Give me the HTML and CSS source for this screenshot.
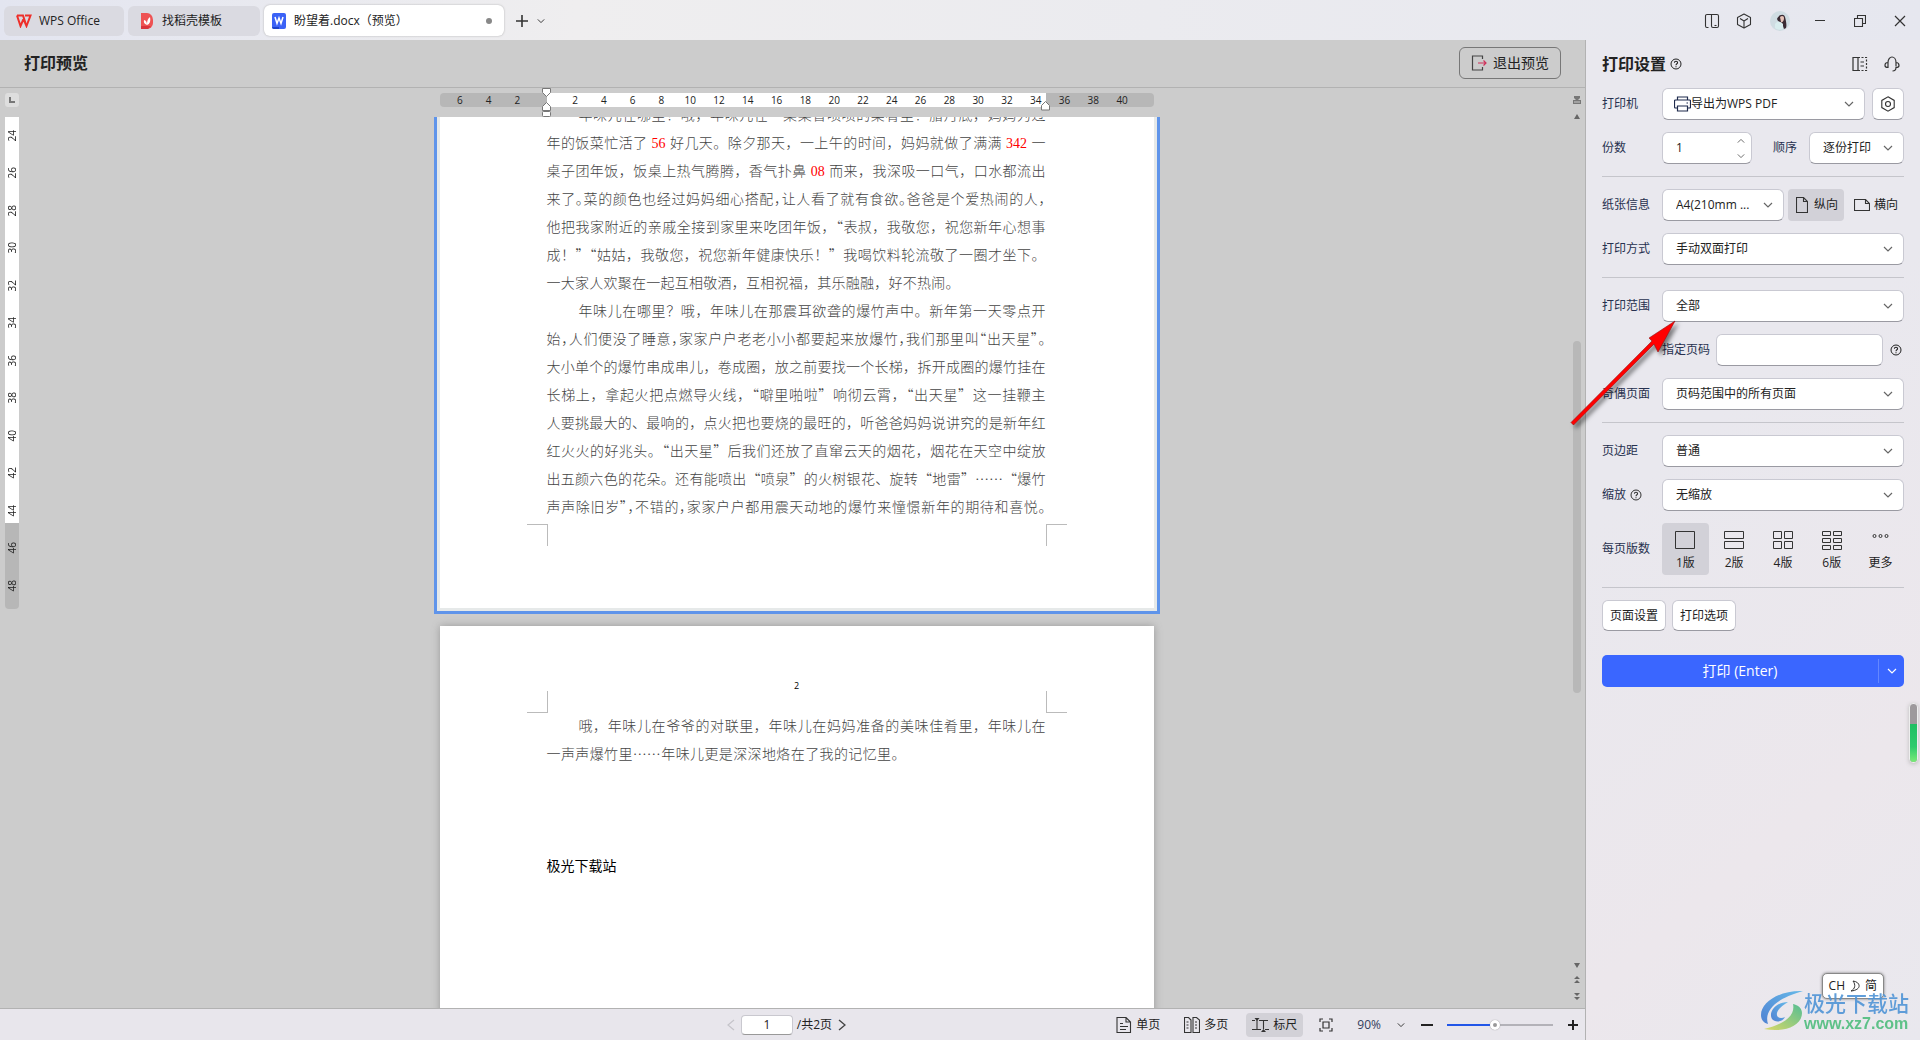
FILE: index.html
```html
<!DOCTYPE html>
<html lang="zh-CN">
<head>
<meta charset="utf-8">
<title>盼望着.docx（预览） - WPS Office</title>
<link rel="stylesheet" href="styles.css">
</head>
<body>
<svg class="defs" width="0" height="0" aria-hidden="true">
  <symbol id="chev" viewBox="0 0 10 10"><path d="M1 3l4 4 4-4" fill="none" stroke="currentColor" stroke-width="1.2"/></symbol>
  <symbol id="help" viewBox="0 0 12 12"><circle cx="6" cy="6" r="5" fill="none" stroke="currentColor"/><path d="M4.4 4.8C4.4 2.6 7.6 2.7 7.6 4.7 7.6 5.800 6 5.800 6 7.200M6 8.200v1.100" fill="none" stroke="currentColor" stroke-width="1.100"/></symbol>
</svg>
<div class="app">
  <header class="titlebar">
    <nav class="tabs">
      <button class="tab tab--home"><svg width="16" height="14" viewBox="0 0 16 14"><path d="M1 1.500h6L9.500 9M1 1.500L4.500 12 7.500 5l3 7L14.500 1.500H9" fill="none" stroke="#ee2f2a" stroke-width="2"/></svg>WPS Office</button>
      <button class="tab tab--docer"><svg width="14" height="16" viewBox="0 0 14 16"><path d="M1 0h6a6 7 0 0 1 6 7v3a6 6 0 0 1-6 6H1z" fill="#ee5253"/><path d="M1 13h10l-3 3H1z" fill="#d9343c"/><path d="M7 12C4 11 3.500 9 4 7c2 .5 3 2 3 5 0-4 .5-6 3-8 .8 4 0 7-3 8z" fill="#fff"/></svg>找稻壳模板</button>
      <button class="tab tab--active"><svg width="14" height="16" viewBox="0 0 14 16"><rect width="14" height="16" rx="2" fill="#3b62f6"/><path d="M0 14h7v2H2a2 2 0 0 1-2-2z" fill="#1d42c8"/><path d="M3 4l2 6.500L7 5l2 5.500L11 4" fill="none" stroke="#fff" stroke-width="1.500"/></svg><span class="tab__name">盼望着.docx（预览）</span><i class="tab__dot"></i></button>
      <button class="icon-btn icon-btn--new" aria-label="新建"><svg width="14" height="14" viewBox="0 0 14 14"><path d="M7 1v12M1 7h12" stroke="#333" stroke-width="1.600"/></svg></button>
      <button class="icon-btn" aria-label="标签列表"><svg width="8" height="8"><use href="#chev"/></svg></button>
    </nav>
    <div class="winctl">
      <button class="icon-btn" aria-label="侧边"><svg width="16" height="16" viewBox="0 0 16 16"><g fill="none" stroke="#333" stroke-width="1.100"><path d="M4.500 14.500H3A1.500 1.500 0 0 1 1.500 13V3A1.500 1.500 0 0 1 3 1.500h10A1.500 1.500 0 0 1 14.500 3v10a1.500 1.500 0 0 1-1.500 1.500H9A1.500 1.500 0 0 1 7.500 13V1.500"/><path d="M10.500 12.500h2"/></g></svg></button>
      <button class="icon-btn" aria-label="应用"><svg width="16" height="16" viewBox="0 0 16 16"><g fill="none" stroke="#333" stroke-width="1.100" stroke-linejoin="round"><path d="M8 1l6.500 3.500v7L8 15l-6.500-3.500v-7z"/><path d="M4 5.500l4 2.500 4-2.500M8 8v7"/></g></svg></button>
      <button class="icon-btn icon-btn--user" aria-label="账号"><svg width="20" height="20" viewBox="0 0 20 20"><circle cx="10" cy="10" r="10" fill="#cfdce2"/><path d="M7 8c1-4 7-6 8-2 1 4 2 8 1 11l-2 1-2-6-4-2z" fill="#3a2b33"/><path d="M10 6c2-2 4-1 4 1s-1 5-3 4z" fill="#e7c3b8"/><path d="M5 13c3-4 6-2 8 0l0 5c-3 1-6 1-8-1z" fill="#d8edee"/></svg></button>
      <button class="icon-btn icon-btn--win" aria-label="最小化"><svg width="12" height="12" viewBox="0 0 12 12"><path d="M1 5.500h10" stroke="#333"/></svg></button>
      <button class="icon-btn icon-btn--win" aria-label="还原"><svg width="12" height="12" viewBox="0 0 12 12"><path d="M.5 3.500h8v8h-8zM3.500 3.500v-3h8v8h-3" fill="none" stroke="#333" stroke-width="1.100"/></svg></button>
      <button class="icon-btn icon-btn--win" aria-label="关闭"><svg width="12" height="12" viewBox="0 0 12 12"><path d="M1 1l10 10M11 1L1 11" stroke="#333" stroke-width="1.200"/></svg></button>
    </div>
  </header>

  <main class="preview">
    <div class="preview__head">
      <h1 class="title">打印预览</h1>
      <button class="exit"><svg width="16" height="16" viewBox="0 0 16 16"><path d="M11.500 4V1H1.500v14h10v-3" fill="none" stroke="#444" stroke-width="1.200"/><path d="M7 8h8M12.500 5.500L15 8l-2.500 2.500" fill="none" stroke="#d0315a" stroke-width="1.200"/></svg>退出预览</button>
    </div>
    <div class="workspace">
      <div class="corner"><svg width="14" height="14" viewBox="0 0 14 14"><rect width="14" height="14" rx="3" fill="#dedede"/><path d="M5 4v5h5" fill="none" stroke="#777" stroke-width="2"/></svg></div>
      <div class="hruler-row">
        <div class="hruler">
          <span>6</span><span>4</span><span>2</span><span></span><span>2</span><span>4</span><span>6</span><span>8</span><span>10</span><span>12</span><span>14</span><span>16</span><span>18</span><span>20</span><span>22</span><span>24</span><span>26</span><span>28</span><span>30</span><span>32</span><span>34</span><span>36</span><span>38</span><span>40</span>
          <svg class="indent indent--left" width="12" height="30" viewBox="0 0 12 30"><g fill="#fff" stroke="#777"><path d="M1.500.5h8v4l-4 4-4-4z"/><path d="M5.500 14.500l4 4v4h-8v-4z"/><rect x="1.500" y="23.500" width="8" height="5" rx="1"/></g></svg>
          <svg class="indent indent--right" width="12" height="30" viewBox="0 0 12 30"><path d="M5.500 13.500l4 4v4.500h-8v-4.500z" fill="#fff" stroke="#777"/></svg>
        </div>
      </div>
      <div class="vruler-col">
        <div class="vruler"><span>24</span><span>26</span><span>28</span><span>30</span><span>32</span><span>34</span><span>36</span><span>38</span><span>40</span><span>42</span><span>44</span><span>46</span><span>48</span></div>
      </div>
      <div class="pages">
        <article class="page page--current">
          <div class="text">
            <p><span class="line line--first">年味儿在哪里？哦，年味儿在一桌桌香喷喷的菜肴里！腊月底，妈妈为过</span>
            <span class="line">年的饭菜忙活了<b class="num">56</b>好几天。除夕那天，一上午的时间，妈妈就做了满满<b class="num">342</b>一</span>
            <span class="line">桌子团年饭，饭桌上热气腾腾，香气扑鼻<b class="num">08</b>而来，我深吸一口气，口水都流出</span>
            <span class="line line--tight">来了。菜的颜色也经过妈妈细心搭配，让人看了就有食欲。爸爸是个爱热闹的人，</span>
            <span class="line">他把我家附近的亲戚全接到家里来吃团年饭，“表叔，我敬您，祝您新年心想事</span>
            <span class="line">成！”“姑姑，我敬您，祝您新年健康快乐！”我喝饮料轮流敬了一圈才坐下。</span>
            <span class="line line--last-a">一大家人欢聚在一起互相敬酒，互相祝福，其乐融融，好不热闹。</span></p>
            <p><span class="line line--first">年味儿在哪里？哦，年味儿在那震耳欲聋的爆竹声中。新年第一天零点开</span>
            <span class="line line--tight">始，人们便没了睡意，家家户户老老小小都要起来放爆竹，我们那里叫“出天星”。</span>
            <span class="line">大小单个的爆竹串成串儿，卷成圈，放之前要找一个长梯，拆开成圈的爆竹挂在</span>
            <span class="line">长梯上，拿起火把点燃导火线，“噼里啪啦”响彻云霄，“出天星”这一挂鞭主</span>
            <span class="line">人要挑最大的、最响的，点火把也要烧的最旺的，听爸爸妈妈说讲究的是新年红</span>
            <span class="line">红火火的好兆头。“出天星”后我们还放了直窜云天的烟花，烟花在天空中绽放</span>
            <span class="line">出五颜六色的花朵。还有能喷出“喷泉”的火树银花、旋转“地雷”……“爆竹</span>
            <span class="line line--tight">声声除旧岁”，不错的，家家户户都用震天动地的爆竹来憧憬新年的期待和喜悦。</span></p>
          </div>
          <div class="marks marks--bottom"><i></i><i></i></div>
        </article>
        <article class="page page--next">
          <div class="page__no">2</div>
          <div class="marks marks--top"><i></i><i></i></div>
          <div class="text">
            <p><span class="line line--first">哦，年味儿在爷爷的对联里，年味儿在妈妈准备的美味佳肴里，年味儿在</span>
            <span class="line line--last-b">一声声爆竹里……年味儿更是深深地烙在了我的记忆里。</span></p>
            <p class="sign">极光下载站</p>
          </div>
        </article>
      </div>
      <div class="scroll">
        <svg width="10" height="10" viewBox="0 0 10 10"><path d="M2 0h6v2L6 4h3v4H1V4h3L2 2z" fill="#777"/><path d="M0 8.500h10M3 5v2M5 5v2M7 5v2" stroke="#ccc"/></svg>
        <svg width="6" height="5" viewBox="0 0 6 5"><path d="M3 0l3 5H0z" fill="#666"/></svg>
        <div class="scroll__track"><div class="scroll__thumb"></div></div>
        <svg width="6" height="5" viewBox="0 0 6 5"><path d="M3 5l3-5H0z" fill="#666"/></svg>
        <svg width="6" height="8" viewBox="0 0 6 8"><path d="M3 0l3 3H0zM3 4l3 3H0z" fill="#666"/></svg>
        <svg width="6" height="8" viewBox="0 0 6 8"><path d="M3 4l3-3H0zM3 8l3-3H0z" fill="#666"/></svg>
      </div>
    </div>
    <footer class="status">
      <div class="pager">
        <button class="icon-btn pager__prev" aria-label="上一页"><svg width="8" height="12" viewBox="0 0 8 12"><path d="M7 1L1 6l6 5" fill="none" stroke="#c5c4ca" stroke-width="1.200"/></svg></button>
        <input class="pager__input" aria-label="页码" value="1"><span>/共2页</span>
        <button class="icon-btn" aria-label="下一页"><svg width="8" height="12" viewBox="0 0 8 12"><path d="M1 1l6 5-6 5" fill="none" stroke="#444" stroke-width="1.400"/></svg></button>
      </div>
      <div class="views">
        <button class="view"><svg width="16" height="16" viewBox="0 0 16 16"><path d="M1 .5h9l4.500 4.500v10.500H1zM10 .5V5h4.500M4 6.500h3M4 9.500h8M4 12.500h6" fill="none" stroke="#333" stroke-width="1.100"/></svg>单页</button>
        <button class="view"><svg width="16" height="16" viewBox="0 0 16 16"><path d="M.5.500h4L7 3v12.500H.500zM9 .5h3.500L15.500 3v12.500H9zM2.500 5h2M2.500 8h2M2.500 11h2M11 5h2M11 8h2M11 11h2" fill="none" stroke="#333" stroke-width="1.100"/></svg>多页</button>
        <button class="view view--on"><svg width="17" height="16" viewBox="0 0 17 16"><path d="M0 3.500h3M7 3.500h9M0 12.500h9M13 12.500h4M5 3v9.500M11.500 3.500V12" fill="none" stroke="#333" stroke-width="1.100"/><path d="M2.500 1h5L5 4zM9 15h5l-2.500-3z" fill="#333"/></svg>标尺</button>
        <button class="icon-btn icon-btn--fit" aria-label="适合页面"><svg width="14" height="14" viewBox="0 0 14 14"><path d="M1 4V1h3M10 1h3v3M13 10v3h-3M4 13H1v-3M4 4h6v6H4z" fill="none" stroke="#333" stroke-width="1.200"/></svg></button>
        <span class="zoom-val">90%</span>
        <button class="icon-btn icon-btn--zoom" aria-label="缩放比例"><svg width="8" height="8"><use href="#chev"/></svg></button>
        <button class="icon-btn" aria-label="缩小"><svg width="12" height="12" viewBox="0 0 12 12"><path d="M0 6h12" stroke="#222" stroke-width="2"/></svg></button>
        <input class="zoom" type="range" min="0" max="100" value="45" aria-label="缩放">
        <button class="icon-btn" aria-label="放大"><svg width="10" height="10" viewBox="0 0 10 10"><path d="M5 0v10M0 5h10" stroke="#222" stroke-width="2"/></svg></button>
      </div>
    </footer>
  </main>

  <aside class="panel">
    <div class="panel__head">
      <h2 class="title">打印设置</h2><svg width="12" height="12"><use href="#help"/></svg>
      <button class="icon-btn panel__dock" aria-label="停靠"><svg width="16" height="16" viewBox="0 0 16 16"><path d="M1 1.500h5v13H1z" fill="none" stroke="#333" stroke-width="1.200"/><path d="M6 1.500h8.500v13H6" fill="none" stroke="#333" stroke-width="1.200" stroke-dasharray="2 1.500"/><path d="M8.500 6h3.500M8.500 10h3.500" stroke="#333" stroke-width="1.200"/></svg></button>
      <button class="icon-btn" aria-label="客服"><svg width="16" height="16" viewBox="0 0 16 16"><path d="M4 6.500a4 5.500 0 0 1 8 0v4M4 6.500C1.500 6.500 1 8 1 9.500s1 2 3 2zM12 6.500c2.500 0 3 1.500 3 3s-1 2-3 2c0 2-1 3.500-3.500 3.500" fill="none" stroke="#333" stroke-width="1.200"/></svg></button>
    </div>
    <section class="group">
      <div class="row">
        <label class="label" for="printer">打印机</label>
        <div class="field field--grow"><svg width="17" height="16" viewBox="0 0 17 16"><path d="M3.500 4V1h10v3M3.500 12H1.500a1 1 0 0 1-1-1V5a1 1 0 0 1 1-1h14a1 1 0 0 1 1 1v6a1 1 0 0 1-1 1h-2M3.500 10h10v5h-10zM12.500 7h1.500" fill="none" stroke="#1f2b4d" stroke-width="1.200"/></svg><select id="printer"><option>导出为WPS PDF</option></select><svg class="caret" width="10" height="10"><use href="#chev"/></svg></div>
        <button class="field field--square" aria-label="打印机属性"><svg width="16" height="16" viewBox="0 0 16 16"><path d="M8 .8l6.200 3.600v7.200L8 15.200l-6.200-3.600V4.400z" fill="none" stroke="#333" stroke-width="1.100"/><circle cx="8" cy="8" r="2.500" fill="none" stroke="#333" stroke-width="1.100"/></svg></button>
      </div>
      <div class="row">
        <label class="label" for="copies">份数</label>
        <div class="field field--copies"><input id="copies" value="1"><div class="spin"><svg class="up" width="8" height="8"><use href="#chev"/></svg><svg width="8" height="8"><use href="#chev"/></svg></div></div>
        <label class="label label--order" for="order">顺序</label>
        <div class="field field--order"><select id="order"><option>逐份打印</option></select><svg class="caret" width="10" height="10"><use href="#chev"/></svg></div>
      </div>
    </section>
    <section class="group">
      <div class="row row--paper">
        <label class="label" for="paper">纸张信息</label>
        <div class="field field--paper"><select id="paper"><option>A4(210mm ...</option></select><svg class="caret" width="10" height="10"><use href="#chev"/></svg></div>
        <button class="orient orient--on"><svg width="12" height="16" viewBox="0 0 12 16"><path d="M.5.500h7l4 4v11H.500zM7.500.500v4h4" fill="none" stroke="#333" stroke-width="1.100"/></svg>纵向</button>
        <button class="orient orient--wide"><svg width="16" height="12" viewBox="0 0 16 12"><path d="M.5.500h11l4 4v7H.500zM11.500.500v4h4" fill="none" stroke="#333" stroke-width="1.100"/></svg>横向</button>
      </div>
      <div class="row">
        <label class="label" for="mode">打印方式</label>
        <div class="field field--grow"><select id="mode"><option>手动双面打印</option></select><svg class="caret" width="10" height="10"><use href="#chev"/></svg></div>
      </div>
    </section>
    <section class="group">
      <div class="row">
        <label class="label" for="range">打印范围</label>
        <div class="field field--grow"><select id="range"><option>全部</option></select><svg class="caret" width="10" height="10"><use href="#chev"/></svg></div>
      </div>
      <div class="row row--pages">
        <label class="label" for="pages">指定页码</label>
        <div class="field field--grow"><input id="pages"></div><svg width="12" height="12"><use href="#help"/></svg>
      </div>
      <div class="row">
        <label class="label" for="parity">奇偶页面</label>
        <div class="field field--grow"><select id="parity"><option>页码范围中的所有页面</option></select><svg class="caret" width="10" height="10"><use href="#chev"/></svg></div>
      </div>
    </section>
    <section class="group">
      <div class="row">
        <label class="label" for="margin">页边距</label>
        <div class="field field--grow"><select id="margin"><option>普通</option></select><svg class="caret" width="10" height="10"><use href="#chev"/></svg></div>
      </div>
      <div class="row">
        <label class="label" for="scale">缩放 <svg width="12" height="12"><use href="#help"/></svg></label>
        <div class="field field--grow"><select id="scale"><option>无缩放</option></select><svg class="caret" width="10" height="10"><use href="#chev"/></svg></div>
      </div>
      <div class="row row--tiles">
        <span class="label">每页版数</span>
        <div class="tiles">
          <button class="tile tile--on"><svg width="20" height="20" viewBox="0 0 20 20"><path d="M.5 1.500h19v17H.500z"/></svg>1版</button>
          <button class="tile"><svg width="20" height="20" viewBox="0 0 20 20"><path d="M.5 1.500h19v7H.500zM.5 11.500h19v7H.500z"/></svg>2版</button>
          <button class="tile"><svg width="20" height="20" viewBox="0 0 20 20"><path d="M.5 1.500h8v7h-8zM11.500 1.500h8v7h-8zM.5 11.500h8v7h-8zM11.500 11.500h8v7h-8z"/></svg>4版</button>
          <button class="tile"><svg width="20" height="20" viewBox="0 0 20 20"><path d="M.5 1.500h8v4h-8zM11.500 1.500h8v4h-8zM.5 8.500h8v4h-8zM11.500 8.500h8v4h-8zM.5 15.500h8v4h-8zM11.500 15.500h8v4h-8z"/></svg>6版</button>
          <button class="tile"><svg width="20" height="20" viewBox="0 0 20 20"><circle cx="3.500" cy="6" r="1.500"/><circle cx="9.500" cy="6" r="1.500"/><circle cx="15.500" cy="6" r="1.500"/></svg>更多</button>
        </div>
      </div>
    </section>
    <div class="actions"><button class="small-btn">页面设置</button><button class="small-btn">打印选项</button></div>
    <div class="print"><button class="print__go">打印 (Enter)</button><button class="print__more" aria-label="更多打印方式"><svg width="10" height="10"><use href="#chev"/></svg></button></div>
  </aside>
</div>

<svg class="arrow" width="120" height="120" viewBox="0 0 120 120"><path d="M8 109.500L10.500 112 91 31l4 8L112 8 86 25l3 3z" fill="#f00" stroke="#901010" stroke-width=".6"/></svg>
<div class="meter"><i></i></div>
<div class="ime">CH <svg width="12" height="12" viewBox="0 0 12 12"><path d="M4 1c8 1 9 9-2 10 4-2 5-6 2-10z" fill="none" stroke="#333"/></svg> 简</div>
<div class="watermark">
  <svg width="44" height="42" viewBox="0 0 44 42"><defs><linearGradient id="wb" x1="0" y1="1" x2="1" y2="0"><stop offset="0" stop-color="#3f78d0"/><stop offset="1" stop-color="#58b4e8"/></linearGradient><linearGradient id="wg" x1="0" y1="1" x2="1" y2="0"><stop offset="0" stop-color="#d9d85a"/><stop offset="1" stop-color="#45b98a"/></linearGradient></defs><path d="M43 1C20 0 1 12 1 25c0 5 3 8 7 9-4-12 6-25 35-33z" fill="url(#wb)"/><path d="M28 12C16 12 8 22 12 29c3 4 11 3 13-2-4 2-9 1-8-4 1-4 6-8 11-11z" fill="url(#wb)"/><path d="M33 14c2 9-4 19-29 25 20 4 38-3 38-16 0-5-4-8-9-9z" fill="url(#wg)"/></svg>
  <div><div class="watermark__name">极光下载站</div><div class="watermark__url">www.xz7.com</div></div>
</div>
</body>
</html>
```
FILE: styles.css
```css
* { box-sizing: border-box; }
body {
  margin: 0;
  font: 12px/16px "Open Sans", "Noto Sans CJK SC", sans-serif;
  color: #222;
  background: #e9e8ee;
}
button, input, select { font: inherit; color: inherit; margin: 0; padding: 0; border: 0; background: none; outline: 0; }
button { display: flex; align-items: center; white-space: nowrap; }
svg { display: block; flex: none; }
.defs { position: absolute; }
.title { margin: 0; font-size: 16px; line-height: 24px; font-weight: 700; }

.app {
  display: grid;
  grid-template: 40px minmax(0, 1fr) / minmax(0, 1fr) 334px;
  height: 100vh;
  background: linear-gradient(140deg, #e9e8ee 70%, #ece7ec 88%, #e9e8ee);
}

/* title bar */
.titlebar {
  grid-column: 1 / -1;
  display: flex;
  justify-content: space-between;
  padding-top: 1px;
  background: linear-gradient(90deg, #e3e5f0, #efeeef 30%, #ebebef 60%, #e6e7ef);
}
.tabs { display: flex; align-items: center; gap: 4px; padding-left: 4px; }
.tab { height: 30px; padding: 0 12px; gap: 8px; border-radius: 6px; background: #dadae1; }
.tab--home { width: 120px; gap: 7px; }
.tab--docer { width: 132px; }
.tab--active { width: 240px; height: 31px; padding: 0 12px 0 8px; background: #fff; box-shadow: 0 0 2px #aaa; }
.tab__name { flex: 1; text-align: left; }
.tab__dot { width: 6px; height: 6px; border-radius: 3px; background: #888; }
.icon-btn { flex: none; justify-content: center; color: #333; }
.icon-btn--new { margin: 0 4px 0 7px; }
.winctl { display: flex; align-items: center; }
.winctl .icon-btn { width: 32px; }
.winctl .icon-btn--user, .winctl .icon-btn--win { width: 40px; }

/* preview area */
.preview {
  display: grid;
  grid-template-rows: 48px minmax(0, 1fr) 32px;
  border-right: 1px solid #b2b2b2;
  background: #ccc;
}
.preview__head { display: flex; align-items: center; justify-content: space-between; padding: 0 24px 1px; border-bottom: 1px solid #b2b2b2; }
.exit { height: 32px; padding: 0 11px; gap: 6px; border: 1px solid #777; border-radius: 6px; font-size: 14px; }
.workspace { display: grid; grid-template: 29px minmax(0, 1fr) / 24px minmax(0, 1fr) 16px; }
.corner { padding: 5px 0 0 5px; }
.hruler-row { display: flex; justify-content: center; padding-top: 5px; }
.hruler {
  position: relative;
  display: grid;
  grid-template-columns: repeat(24, 1fr);
  width: 714px;
  height: 14px;
  padding: 0 17px 0 6px;
  border-radius: 4px;
  background: linear-gradient(90deg, #b7b7b7 107px, #fff 107px, #fff 606px, #b7b7b7 606px);
  font-size: 10px;
  line-height: 14px;
  text-align: center;
}
.indent { position: absolute; top: -5px; }
.indent--left { left: 101px; }
.indent--right { left: 600px; }
.vruler-col { padding-left: 5px; }
.vruler {
  display: grid;
  grid-template-rows: repeat(13, 1fr);
  width: 14px;
  height: 492px;
  padding-bottom: 5px;
  border-radius: 0 0 4px 4px;
  background: linear-gradient(#fff 406px, #b7b7b7 406px);
  font-size: 10px;
  line-height: 14px;
}
.vruler span { writing-mode: vertical-rl; transform: rotate(180deg); text-align: center; }

.pages { display: flex; flex-direction: column; align-items: center; gap: 12px; overflow: hidden; }
.page { flex: none; width: 714px; background: #fff; }
.page--current {
  width: 726px;
  padding-bottom: 65px;
  border: 3px solid #5f94ea;
  border-top: 0;
  box-shadow: inset 3px 0 #e6e9e9, inset -3px -3px #e6e9e9;
}
.page--current .text, .page--current .marks { margin-left: 3px; margin-right: 3px; }
.page--next { height: 520px; box-shadow: 0 0 8px #999; }
.text { padding: 0 108px 0 107px; color: #444; font: 300 14px/28px "Noto Sans CJK SC", sans-serif; }
.page--current .text { margin-top: -17px; }
.text p { margin: 0; }
.line { display: block; white-space: nowrap; text-align: justify; text-align-last: justify; }
.line--first { padding-left: 32px; }
.line--tight { font-feature-settings: "halt"; }
.line--last-a { margin-right: 86px; }
.line--last-b { margin-right: 140px; }
.num { margin: 0 4px; color: #f00; font: 14px/14px "Liberation Serif", serif; }
.text .sign { margin-top: 84px; color: #000; font-weight: 400; }
.marks { display: flex; justify-content: space-between; padding: 0 87px; }
.marks i { width: 21px; height: 22px; border: 0 solid #bbb; }
.marks i:first-child { border-right-width: 1px; }
.marks i:last-child { border-left-width: 1px; }
.marks--bottom { padding-top: 4px; }
.marks--bottom i { border-top-width: 1px; }
.marks--top { margin-bottom: -2px; }
.marks--top i { border-bottom-width: 1px; }
.page__no { padding-top: 52px; height: 65px; color: #000; font-size: 9px; line-height: 16px; text-align: center; }

.scroll { grid-area: 1 / 3 / 3 / 4; display: flex; flex-direction: column; align-items: center; gap: 8px; padding: 8px 0; }
.scroll__track { flex: 1; display: grid; grid-template-rows: 215fr 354fr 264fr; width: 8px; }
.scroll__thumb { grid-row: 2; border-radius: 4px; background: #b8b8b8; }

/* status bar */
.status {
  display: grid;
  grid-template-columns: 1fr auto 1fr;
  align-items: center;
  padding-right: 7px;
  border-top: 1px solid #b2b2b2;
  background: #e8e6ec;
}
.pager { grid-column: 2; display: flex; align-items: center; gap: 4px; margin-right: 5px; }
.pager .icon-btn { width: 12px; }
.pager__input { width: 52px; height: 20px; border: 1px solid #c9c8cf; border-bottom-color: #999; border-radius: 4px; background: #fff; text-align: center; }
.views { display: flex; align-items: center; justify-content: flex-end; }
.view { height: 24px; padding: 0 6px; gap: 4px; border-radius: 4px; margin-right: 12px; }
.view--on { background: #d2d1d7; }
.icon-btn--fit { margin: 0 24px 0 4px; }
.zoom-val { color: #33405c; }
.icon-btn--zoom { margin: 0 16px 0 16px; }
.zoom { width: 106px; height: 12px; margin: 0 15px 0 14px; appearance: none; }
.zoom::-webkit-slider-runnable-track { height: 2px; background: linear-gradient(90deg, #2156e8 45%, #b3b2b8 45%); }
.zoom::-webkit-slider-thumb { appearance: none; width: 10px; height: 10px; margin-top: -4px; border: 3px solid #fff; border-radius: 5px; background: #999; box-shadow: 0 0 1px #777; }

/* settings panel */
.panel { padding: 0 16px; display: flex; flex-direction: column; }
.panel__head { display: flex; align-items: center; gap: 10px; height: 48px; padding-bottom: 1px; }
.panel__head > svg { margin-left: -6px; }
.panel__head .icon-btn { width: 16px; margin-right: 4px; }
.panel__head .panel__dock { margin: 0 6px 0 auto; }
.group { display: flex; flex-direction: column; gap: 12px; padding: 12px 0; border-bottom: 1px solid #c5c5cb; }
.panel__head + .group { padding-top: 0; }
.row { display: flex; align-items: center; min-height: 32px; }
.label { display: flex; align-items: center; gap: 4px; width: 60px; flex: none; color: #27314f; }
.label svg { color: #333; }
.field {
  display: flex;
  align-items: center;
  height: 32px;
  padding: 0 10px 0 13px;
  border: 1px solid #c9c9d2;
  border-bottom-color: #9a9aa2;
  border-radius: 6px;
  background: #fff;
}
.field select { flex: 1; min-width: 0; height: 30px; appearance: none; margin-right: -10px; padding-right: 10px; }
.field input { width: 100%; min-width: 0; }
.field > svg:first-child { margin-left: -2px; }
.caret { color: #666; pointer-events: none; }
.field--grow { flex: 1; min-width: 0; }
.field--square { width: 32px; padding: 0; justify-content: center; margin-left: 7px; }
.field--square > svg:first-child { margin: 0; }
.field--copies { width: 90px; padding-right: 6px; }
.spin { display: grid; gap: 7px; color: #666; }
.up { transform: rotate(180deg); }
.label--order { width: 36px; margin-left: auto; }
.field--order { width: 95px; }
.field--paper { flex: none; width: 122px; }
.orient { flex: none; width: 56px; height: 32px; padding-left: 8px; gap: 6px; margin-left: 4px; border-radius: 4px; }
.orient--on { background: #d2d1d8; }
.orient--wide { padding-left: 6px; gap: 4px; }
.row--pages { padding-left: 60px; }
.row--pages .label { width: 54px; }
.row--pages > svg { margin: 0 2px 0 7px; }
.tiles { flex: 1; display: flex; gap: 2px; }
.tile { flex: 1; flex-direction: column; gap: 5px; height: 52px; padding-top: 7px; border-radius: 4px; }
.tile svg { fill: none; stroke: #333; }
.tile--on { background: #d2d1d8; }
.actions { display: flex; gap: 6px; margin: 12px 0 24px; }
.small-btn { height: 31px; padding: 0 7px; border: 1px solid #c9c9d2; border-bottom-color: #9a9aa2; border-radius: 6px; background: #fff; }
.print { display: flex; align-items: center; height: 32px; border-radius: 5px; background: #3a66ff; color: #fff; font-size: 14px; }
.print__go { flex: 1; justify-content: center; height: 32px; }
.print__more { width: 26px; height: 24px; justify-content: center; color: #fff; border-left: 1px solid #6487ff; }

/* overlays */
.arrow { position: absolute; right: 237px; top: 313px; filter: drop-shadow(3px 3px 2px rgba(0, 0, 0, .5)); pointer-events: none; }
.meter { position: absolute; right: 2px; top: 703px; width: 9px; height: 60px; padding-top: 20px; border: 1px solid #eee; border-radius: 4px; background: #9d999c; box-shadow: 0 1px 4px #bbb; }
.meter i { display: block; height: 38px; border-radius: 0 0 4px 4px; background: linear-gradient(#1fbf63, #2fcb6c 60%, #7bea78); }
.ime { position: absolute; right: 36px; bottom: 41px; display: flex; align-items: center; gap: 4px; height: 26px; padding: 0 6px; border-radius: 5px; border: 1px solid #888; background: #fff; box-shadow: 0 0 3px #777; }
.watermark { position: absolute; right: 11px; bottom: 7px; display: flex; align-items: center; color: #4f94d6; opacity: .9; }
.watermark__name { font: 500 21px/26px "Noto Sans CJK SC", sans-serif; }
.watermark__url { font: 700 16px/18px "Liberation Sans", sans-serif; color: #4fbd7e; }
```
